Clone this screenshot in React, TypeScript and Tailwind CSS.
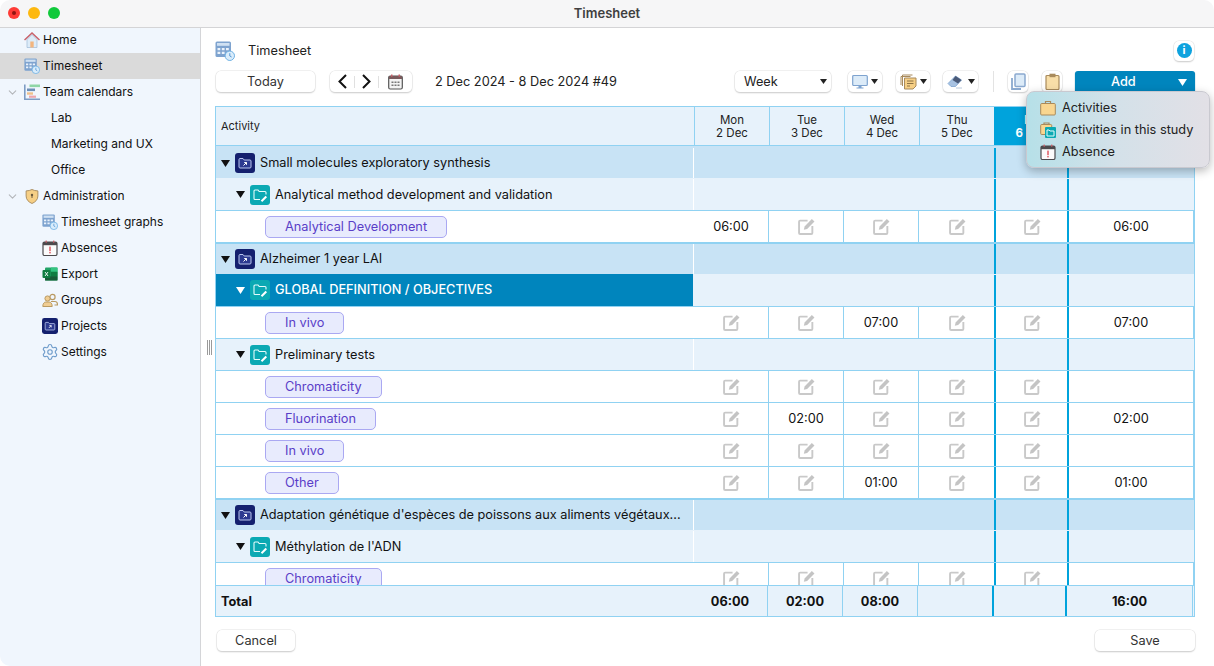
import React from 'react';
import { ChevronDown, Settings as GearIcon } from 'lucide-react';

const TimesheetIcon = ({ size = 20 }: { size?: number }) => (
    <svg width={size} height={size} viewBox="0 0 20 20">
        <rect x="0.500" y="0.500" width="15.500" height="15.500" rx="1.500" fill="#7ea3cf" />
        <rect x="2" y="2" width="12.500" height="2.800" fill="#cfe0f2" />
        <path d="M2.500 7h2.800v2.200H2.500zM6.800 7h2.800v2.200H6.800zM11 7h2.800v2.200H11zM2.500 10.700h2.800v2.200H2.500zM6.800 10.700h2.800v2.200H6.800z" fill="#eaf2fb" />
        <circle cx="14.800" cy="14.800" r="4.700" fill="#d9ecfb" stroke="#6fb1e3" strokeWidth="1" />
        <path d="M14.800 12.200v2.800l1.800 1" fill="none" stroke="#4a90cf" strokeWidth="0.900" />
    </svg>
);

const HomeIcon = () => (
    <svg width="16" height="16" viewBox="0 0 16 16">
        <path d="M3 7.500V15.500h10V7.500L8 2.500z" fill="#dcebf8" stroke="#9db9d6" strokeWidth="0.700" />
        <rect x="6.300" y="9.500" width="3.400" height="6" fill="#f2b57f" />
        <path d="M0.500 8 8 1l7.500 7" fill="none" stroke="#c9626b" strokeWidth="1.500" />
    </svg>
);

const TeamIcon = () => (
    <svg width="16" height="16" viewBox="0 0 16 16">
        <path d="M0.800 0.500v14.700H16" fill="none" stroke="#7d9cc4" strokeWidth="1.600" />
        <rect x="5.500" y="0.500" width="10.500" height="2.600" fill="#8fd6a6" />
        <rect x="3" y="4.500" width="8" height="2.600" fill="#6d8fb8" />
        <rect x="3" y="8.300" width="6" height="2.400" fill="#f0c08a" />
        <rect x="5" y="11.600" width="7" height="2.200" fill="#eda5ad" />
    </svg>
);

const ShieldIcon = () => (
    <svg width="14" height="17" viewBox="0 0 15 17">
        <path d="M7.500 1C5.600 2 3.600 2.400 1.200 2.500V8c0 3.800 2.600 6.400 6.300 8 3.700-1.600 6.300-4.200 6.300-8V2.500C11.400 2.400 9.400 2 7.500 1z" fill="#f6cf85" stroke="#a88a5c" strokeWidth="1" />
        <circle cx="7.500" cy="6.800" r="1.300" fill="#6b5a3e" />
        <rect x="7" y="7.500" width="1" height="2.600" fill="#6b5a3e" />
    </svg>
);

const AbsenceIcon = () => (
    <svg width="16" height="16" viewBox="0 0 16 16">
        <rect x="1" y="2" width="14" height="13.500" rx="1.500" fill="#fbfbfb" stroke="#4c4a4d" strokeWidth="1.200" />
        <rect x="1" y="2" width="14" height="3.200" fill="#4c4a4d" />
        <rect x="3.500" y="0.600" width="1.400" height="2" fill="#c9626b" />
        <rect x="11" y="0.600" width="1.400" height="2" fill="#c9626b" />
        <rect x="7.200" y="6.600" width="1.600" height="4.400" fill="#e2636b" />
        <rect x="7.200" y="11.800" width="1.600" height="1.600" fill="#e2636b" />
    </svg>
);

const ExcelIcon = () => (
    <svg width="16" height="16" viewBox="0 0 16 16">
        <rect x="3" y="1.500" width="12.500" height="13" rx="1" fill="#21a366" />
        <rect x="9" y="1.500" width="6.500" height="4.300" fill="#33c481" />
        <rect x="9" y="5.800" width="6.500" height="4.400" fill="#107c41" />
        <rect x="3" y="10.200" width="12.500" height="4.300" fill="#185c37" />
        <rect x="0.500" y="4" width="8" height="8" rx="1" fill="#107c41" />
        <path d="M3 6l3 4M6 6l-3 4" stroke="#fff" strokeWidth="0.900" />
    </svg>
);

const GroupsIcon = () => (
    <svg width="16" height="16" viewBox="0 0 16 16">
        <circle cx="10.500" cy="5" r="2.600" fill="none" stroke="#b99a62" strokeWidth="1.200" />
        <path d="M9 9.500h4c1.500 0 2.500 1 2.500 3.500h-3" fill="none" stroke="#b99a62" strokeWidth="1.200" />
        <circle cx="5.500" cy="6.500" r="2.600" fill="#f0cd93" stroke="#b99a62" strokeWidth="1" />
        <path d="M0.800 14.500c0-3 1.500-4.500 3-4.500h3.400c1.600 0 3 1.500 3 4.500z" fill="#f0cd93" stroke="#b99a62" strokeWidth="1" />
    </svg>
);

const ProjectIcon = ({ size = 16 }: { size?: number }) => (
    <svg width={size} height={size} viewBox="0 0 20 20">
        <rect width="20" height="20" rx="3" fill="#14206e" />
        <path d="M4 6.500c0-.6.400-1 1-1h3l1.200 1.500H15c.6 0 1 .4 1 1v6c0 .6-.4 1-1 1H5c-.6 0-1-.4-1-1z" fill="#2c3a90" stroke="#b9c6ee" strokeWidth="1" />
        <path d="M8.500 12.500l3-3M9.200 9.500h2.300v2.300" fill="none" stroke="#fff" strokeWidth="1" />
    </svg>
);

const StudyIcon = ({ size = 20 }: { size?: number }) => (
    <svg width={size} height={size} viewBox="0 0 20 20">
        <rect width="20" height="20" rx="3" fill="#0ba9b3" />
        <path d="M10 14.500H5c-.6 0-1-.4-1-1V6c0-.6.400-1 1-1h3l1.200 1.500H15c.6 0 1 .4 1 1v2" fill="none" stroke="#e4fbfb" strokeWidth="1.100" />
        <path d="M11.500 16.300l4.800-4.800" fill="none" stroke="#ffffff" strokeWidth="2" />
    </svg>
);

const EditIcon = () => (
    <svg width="17" height="17" viewBox="0 0 16 16" className="ml-px shrink-0">
        <path d="M9 2.500H2c-.6 0-1 .4-1 1V14c0 .6.400 1 1 1h10.500c.6 0 1-.4 1-1V7.500" fill="none" stroke="#c9c9c9" strokeWidth="1.800" />
        <path d="M5.500 11l.7-2.900L13 1l2.500 2.300-6.900 7z" fill="#c4c4c4" />
    </svg>
);

const Caret = ({ white }: { white?: boolean }) => (
    <svg width="9" height="7" viewBox="0 0 9 7" className="shrink-0">
        <path d="M0 0h9L4.500 7z" fill={white ? '#ffffff' : '#111111'} />
    </svg>
);

const SmallCaret = () => (
    <svg width="7" height="5" viewBox="0 0 7 5" className="shrink-0">
        <path d="M0 0h7L3.500 5z" fill="#222222" />
    </svg>
);

const SIDEBAR = [
    { label: 'Home', left: 24, text: 43, icon: <HomeIcon /> },
    { label: 'Timesheet', left: 24, text: 43, icon: <TimesheetIcon size={16} />, selected: true },
    { label: 'Team calendars', left: 24, text: 43, icon: <TeamIcon />, chevron: true },
    { label: 'Lab', left: 51, text: 51 },
    { label: 'Marketing and UX', left: 51, text: 51 },
    { label: 'Office', left: 51, text: 51 },
    { label: 'Administration', left: 24, text: 43, icon: <ShieldIcon />, chevron: true },
    { label: 'Timesheet graphs', left: 42, text: 61, icon: <TimesheetIcon size={16} /> },
    { label: 'Absences', left: 42, text: 61, icon: <AbsenceIcon /> },
    { label: 'Export', left: 42, text: 61, icon: <ExcelIcon /> },
    { label: 'Groups', left: 42, text: 61, icon: <GroupsIcon /> },
    { label: 'Projects', left: 42, text: 61, icon: <ProjectIcon /> },
    { label: 'Settings', left: 42, text: 61, icon: <GearIcon size={18} color="#6f9ccb" strokeWidth={1.500} className="shrink-0" /> },
];

type Row =
    | { kind: 'group'; label: string }
    | { kind: 'study'; label: string; selected?: boolean }
    | { kind: 'activity'; label: string; times: (string | null)[]; total: string };

const ROWS: Row[] = [
    { kind: 'group', label: 'Small molecules exploratory synthesis' },
    { kind: 'study', label: 'Analytical method development and validation' },
    { kind: 'activity', label: 'Analytical Development', times: ['06:00', null, null, null, null], total: '06:00' },
    { kind: 'group', label: 'Alzheimer 1 year LAI' },
    { kind: 'study', label: 'GLOBAL DEFINITION / OBJECTIVES', selected: true },
    { kind: 'activity', label: 'In vivo', times: [null, null, '07:00', null, null], total: '07:00' },
    { kind: 'study', label: 'Preliminary tests' },
    { kind: 'activity', label: 'Chromaticity', times: [null, null, null, null, null], total: '' },
    { kind: 'activity', label: 'Fluorination', times: [null, '02:00', null, null, null], total: '02:00' },
    { kind: 'activity', label: 'In vivo', times: [null, null, null, null, null], total: '' },
    { kind: 'activity', label: 'Other', times: [null, null, '01:00', null, null], total: '01:00' },
    { kind: 'group', label: "Adaptation génétique d'espèces de poissons aux aliments végétaux..." },
    { kind: 'study', label: "Méthylation de l'ADN" },
    { kind: 'activity', label: 'Chromaticity', times: [null, null, null, null, null], total: '' },
];

const BODY_COLS = 'grid-cols-[478px_75px_75px_75px_75px_75px_125px]';

const ToolButton = ({ className, children }: { className: string; children: React.ReactNode }) => (
    <div className={`flex h-[21px] items-center justify-center gap-[3px] rounded-[5px] bg-white shadow-[0_0_0_0.5px_#e2e2e2,0_1px_1.500px_#bdbdbd] ${className}`}>
        {children}
    </div>
);

const TodayCols = ({ bg }: { bg: string }) => (
    <>
        <div className={`col-span-4 ${bg}`} />
        <div className={`border-x-2 border-[#00a3dc] ${bg}`} />
        <div className={`${bg}`} />
    </>
);

const TableRow = ({ row, first }: { row: Row; first: boolean }) => {
    if (row.kind === 'activity') {
        return (
            <div className={`grid h-[32px] ${BODY_COLS} border-b border-[#90d2f2] bg-white text-[#111]`}>
                <div className="flex h-[31px] items-center pl-[49px]">
                    <div className="flex h-[22px] items-center rounded-[5px] border border-[#aaa8f2] bg-[#e8ebfd] px-[19px] text-[#5a3ec8]">{row.label}</div>
                </div>
                {row.times.map((t, i) => (
                    <div
                        key={i}
                        className={`flex h-[31px] items-center justify-center ${i === 4 ? 'border-x-2 border-[#00a3dc]' : i === 3 ? '' : 'border-r border-[#90d2f2]'}`}
                    >
                        {t ?? <EditIcon />}
                    </div>
                ))}
                <div className="flex h-[31px] items-center justify-center border-r border-[#90d2f2]">{row.total}</div>
            </div>
        );
    }
    const isGroup = row.kind === 'group';
    const selected = row.kind === 'study' && row.selected;
    const bg = isGroup ? 'bg-[#c8e3f5]' : 'bg-[#e7f2fb]';
    const rowBorder = isGroup ? `border-y border-b-[#e7f2fb] ${first ? 'border-t-[#c8e3f5]' : 'border-t-[#90d2f2]'}` : 'border-b border-[#90d2f2]';
    return (
        <div className={`grid h-[32px] ${BODY_COLS} ${rowBorder} ${bg}`}>
            <div
                className={`flex items-center border-r ${isGroup ? 'pl-[5px]' : 'pl-[20px]'} ${selected ? '-mt-px border-[#e7f2fb] bg-[#0085bd] font-medium text-white' : 'border-white text-[#111]'}`}
            >
                <Caret white={selected} />
                <span className="ml-[5px]">{isGroup ? <ProjectIcon size={20} /> : <StudyIcon />}</span>
                <span className="ml-[5px] whitespace-nowrap">{row.label}</span>
            </div>
            <TodayCols bg={bg} />
        </div>
    );
};

export default function App() {
    return (
        <div className="flex h-[666px] w-[1214px] flex-col overflow-hidden rounded-[10px] bg-white font-['Inter','Liberation_Sans',sans-serif] text-[12.750px] text-[#111]">
            {/* title bar */}
            <div className="relative flex h-[28px] shrink-0 items-center justify-center border-b border-[#d4d4d6] bg-[#f6f6f7]">
                <div className="absolute left-[8px] top-[7px] flex gap-[8px]">
                    <div className="flex h-[12px] w-[12px] items-center justify-center rounded-full bg-[#fe3b36]">
                        <div className="h-[4px] w-[4px] rounded-full bg-[#8f1512]" />
                    </div>
                    <div className="h-[12px] w-[12px] rounded-full bg-[#fdb80f]" />
                    <div className="h-[12px] w-[12px] rounded-full bg-[#10c93b]" />
                </div>
                <span className="text-[13px] font-semibold text-[#3f3f3f]">Timesheet</span>
            </div>

            <div className="flex min-h-0 flex-1">
                {/* sidebar */}
                <div className="w-[201px] shrink-0 border-r border-[#d4d5d8] bg-[#f0f6fd] text-[12px]">
                    <div className="-mt-px">
                        {SIDEBAR.map(item => (
                            <div key={item.label} className={`relative flex h-[26px] items-center ${item.selected ? 'bg-[#dadada]' : ''}`} style={{ paddingLeft: item.left }}>
                                {item.chevron && <ChevronDown size={13} color="#b3b6ba" strokeWidth={2} className="absolute left-[6px] top-[7px]" />}
                                {item.icon && <span className="flex w-[16px] shrink-0 items-center justify-center">{item.icon}</span>}
                                <span className="whitespace-nowrap" style={{ marginLeft: item.icon ? item.text - item.left - 16 : 0 }}>{item.label}</span>
                            </div>
                        ))}
                    </div>
                </div>

                {/* main */}
                <div className="relative flex min-w-0 flex-1 flex-col pl-[14px] pr-[19px]">
                    <div className="absolute left-[6px] top-[312px] flex gap-[1px]">
                        <div className="h-[15px] w-[1px] bg-[#9a9a9a]" />
                        <div className="h-[15px] w-[1px] bg-[#9a9a9a]" />
                        <div className="h-[15px] w-[1px] bg-[#9a9a9a]" />
                    </div>

                    <div className="flex h-[43px] shrink-0 items-center pt-[2px]">
                        <TimesheetIcon />
                        <span className="ml-[13px] text-[#222]">Timesheet</span>
                        <ToolButton className="ml-auto mr-[1px] !h-[20px] w-[20px]">
                            <div className="flex h-[15px] w-[15px] items-center justify-center rounded-full bg-[#0ea2de] text-[11px] font-bold leading-none text-white">i</div>
                        </ToolButton>
                    </div>

                    <div className="flex h-[35px] shrink-0 items-start pl-[1px]">
                        <ToolButton className="w-[99px] text-[#333]">Today</ToolButton>
                        <ToolButton className="ml-[15px] w-[82px] !justify-start !gap-0 pl-[8px]">
                            <svg width="9" height="15" viewBox="0 0 9 15">
                                <path d="M8 1 1.500 7.500 8 14" fill="none" stroke="#111" strokeWidth="2" />
                            </svg>
                            <div className="ml-[7px] h-[12px] w-[1px] bg-[#e0e0e0]" />
                            <svg width="9" height="15" viewBox="0 0 9 15" className="ml-[7px]">
                                <path d="M1 1l6.500 6.500L1 14" fill="none" stroke="#111" strokeWidth="2" />
                            </svg>
                            <div className="ml-[7px] h-[12px] w-[1px] bg-[#e0e0e0]" />
                            <svg width="15" height="16" viewBox="0 0 15 16" className="ml-[9px]">
                                <rect x="0.700" y="2" width="13.600" height="13" rx="1.500" fill="#f4f4f4" stroke="#555" strokeWidth="1.200" />
                                <rect x="1" y="2" width="13" height="3" fill="#7a5a5c" />
                                <rect x="3" y="0.500" width="1.500" height="2.200" fill="#c9626b" />
                                <rect x="10.500" y="0.500" width="1.500" height="2.200" fill="#c9626b" />
                                <path d="M3.500 7.500h2V9h-2zM6.500 7.500h2V9h-2zM9.500 7.500h2V9h-2zM3.500 10.500h2V12h-2zM6.500 10.500h2V12h-2zM9.500 10.500h2V12h-2z" fill="#777" />
                            </svg>
                        </ToolButton>
                        <span className="ml-[23px] leading-[21px] text-[#222]">2 Dec 2024 - 8 Dec 2024 #49</span>

                        <ToolButton className="ml-auto w-[96px] !justify-between pl-[9px] pr-[4px] text-[#222]">
                            <span>Week</span>
                            <SmallCaret />
                        </ToolButton>
                        <ToolButton className="ml-[17px] w-[34px]">
                            <svg width="16" height="16" viewBox="0 0 16 16">
                                <rect x="0.700" y="1.500" width="14.600" height="10" rx="1" fill="#dcebf8" stroke="#7ea3cf" strokeWidth="1.200" />
                                <path d="M6.500 11.500h3v2h2v1h-7v-1h2z" fill="#7ea3cf" />
                            </svg>
                            <SmallCaret />
                        </ToolButton>
                        <ToolButton className="ml-[14px] w-[34px]">
                            <svg width="17" height="17" viewBox="0 0 17 17">
                                <path d="M1 12V3.500h9.500" fill="none" stroke="#a88a5c" strokeWidth="1" />
                                <path d="M2.500 13V2h10" fill="none" stroke="#a88a5c" strokeWidth="1" />
                                <path d="M4.500 5H16v8l-3 3H4.500z" fill="#f6cf85" stroke="#a88a5c" strokeWidth="1" />
                                <path d="M7 8h6.500M7 10.500h6.500M7 13h3" stroke="#8d7345" strokeWidth="1" />
                            </svg>
                            <SmallCaret />
                        </ToolButton>
                        <ToolButton className="ml-[13px] w-[35px]">
                            <svg width="18" height="15" viewBox="0 0 18 15">
                                <path d="M1 9.500 8.500 2l6 4-6 6.500H4z" fill="#a7c2e2" stroke="#7ea3cf" strokeWidth="0.800" />
                                <path d="M5.500 6l3-4 6 4L11 9.500z" fill="#4a5a78" />
                                <path d="M9 14h6" stroke="#b9c9dc" strokeWidth="1" />
                            </svg>
                            <SmallCaret />
                        </ToolButton>
                        <div className="ml-[15px] h-[21px] w-[1px] bg-[#e3e3e3]" />
                        <ToolButton className="ml-[14px] w-[20px]">
                            <svg width="15" height="17" viewBox="0 0 15 17">
                                <path d="M1 5v11h9" fill="none" stroke="#8aa9cf" strokeWidth="1.800" />
                                <rect x="4" y="1" width="10" height="12.500" rx="1" fill="#dcebf8" stroke="#8aa9cf" strokeWidth="1.500" />
                            </svg>
                        </ToolButton>
                        <ToolButton className="ml-[14px] w-[20px]">
                            <svg width="15" height="17" viewBox="0 0 15 17">
                                <rect x="1" y="2.500" width="13" height="14" rx="1" fill="#f8dea8" stroke="#a88a5c" strokeWidth="1.200" />
                                <rect x="4.500" y="0.700" width="6" height="3.500" fill="#a88a5c" />
                            </svg>
                        </ToolButton>
                        <div className="ml-[13px] flex h-[22px] w-[120px] items-center rounded-[3px] bg-[#0085bd] pl-[36px] pr-[8px] text-white shadow-[0_1px_1px_#00668f]">
                            <span className="flex-1 font-medium">Add</span>
                            <Caret white />
                        </div>
                    </div>

                    {/* table */}
                    <div className="flex w-[980px] shrink-0 flex-col border border-[#90d2f2]">
                        <div className="grid h-[39px] grid-cols-[479px_75px_75px_75px_74px_75px_1fr] border-b border-[#90d2f2] bg-[#e7f2fb] text-[11.500px] leading-[13px] text-[#222]">
                            <div className="flex items-center border-r border-[#90d2f2] pl-[5px] text-[11px]">Activity</div>
                            {[['Mon', '2 Dec'], ['Tue', '3 Dec'], ['Wed', '4 Dec'], ['Thu', '5 Dec']].map(([d, n], i) => (
                                <div key={d} className={`flex flex-col items-center justify-center pt-px ${i < 3 ? 'border-r border-[#90d2f2]' : ''}`}>
                                    <span>{d}</span>
                                    <span>{n}</span>
                                </div>
                            ))}
                            <div className="flex flex-col items-center justify-center bg-[#00a3dc] pt-px font-bold text-white">
                                <span>Fri</span>
                                <span>6 Dec</span>
                            </div>
                            <div className="bg-[#00a3dc]" />
                        </div>

                        <div className="h-[439px] overflow-hidden bg-[#c8e3f5] pt-px">
                            {ROWS.map((row, i) => (
                                <TableRow key={i} row={row} first={i === 0} />
                            ))}
                        </div>

                        <div className="grid h-[31px] grid-cols-[552px_75px_75px_76px_73px_126px] border-t border-[#90d2f2] bg-[#e7f2fb] pt-0 font-bold text-[#111]">
                            <div className="grid grid-cols-[477px_75px]">
                                <div className="flex items-center pl-[5px] pt-px">Total</div>
                                <div className="flex items-center justify-center border-r border-[#90d2f2] pt-px">06:00</div>
                            </div>
                            <div className="flex items-center justify-center border-r border-[#90d2f2] pt-px">02:00</div>
                            <div className="flex items-center justify-center border-r border-[#90d2f2] pt-px">08:00</div>
                            <div className="border-r-2 border-[#00a3dc]" />
                            <div className="border-r-2 border-[#00a3dc]" />
                            <div className="flex items-center justify-center border-r border-[#90d2f2] pt-px">16:00</div>
                        </div>
                    </div>

                    <div className="mt-[13px] flex w-[980px] justify-between pl-[2px]">
                        <ToolButton className="w-[78px] text-[#333]">Cancel</ToolButton>
                        <ToolButton className="w-[100px] text-[#333]">Save</ToolButton>
                    </div>

                    {/* Add menu */}
                    <div className="absolute left-[825px] top-[63px] flex h-[77px] w-[184px] flex-col justify-center rounded-[8px] border border-[#c9c9d0] bg-gradient-to-r from-[#b6e0e8] via-[#d4e1e9] to-[#e2e0e6] pl-[13px] shadow-[0_3px_10px_rgba(0,0,0,0.28)]">
                        {[
                            { label: 'Activities', icon: (
                                <svg width="16" height="16" viewBox="0 0 16 16">
                                    <rect x="0.700" y="3.500" width="14.600" height="11.500" rx="1" fill="#f9d690" stroke="#a88a5c" strokeWidth="1" />
                                    <path d="M5.500 3.500v-2h5v2" fill="none" stroke="#a88a5c" strokeWidth="1.200" />
                                </svg>
                            ) },
                            { label: 'Activities in this study', icon: (
                                <svg width="16" height="16" viewBox="0 0 16 16">
                                    <rect x="0.700" y="2.500" width="11" height="10" rx="1" fill="#f9d690" stroke="#a88a5c" strokeWidth="1" />
                                    <path d="M4 2.500V1h5v1.500" fill="none" stroke="#a88a5c" strokeWidth="1.200" />
                                    <rect x="5" y="5" width="11" height="11" rx="1" fill="#0ba9b3" />
                                    <path d="M7 8h2l1 1h4v5H7z" fill="none" stroke="#e4fbfb" strokeWidth="1" />
                                </svg>
                            ) },
                            { label: 'Absence', icon: <AbsenceIcon /> },
                        ].map(item => (
                            <div key={item.label} className="flex h-[22px] items-center text-[#222]">
                                {item.icon}
                                <span className="ml-[6px] whitespace-nowrap">{item.label}</span>
                            </div>
                        ))}
                    </div>
                </div>
            </div>
        </div>
    );
}
